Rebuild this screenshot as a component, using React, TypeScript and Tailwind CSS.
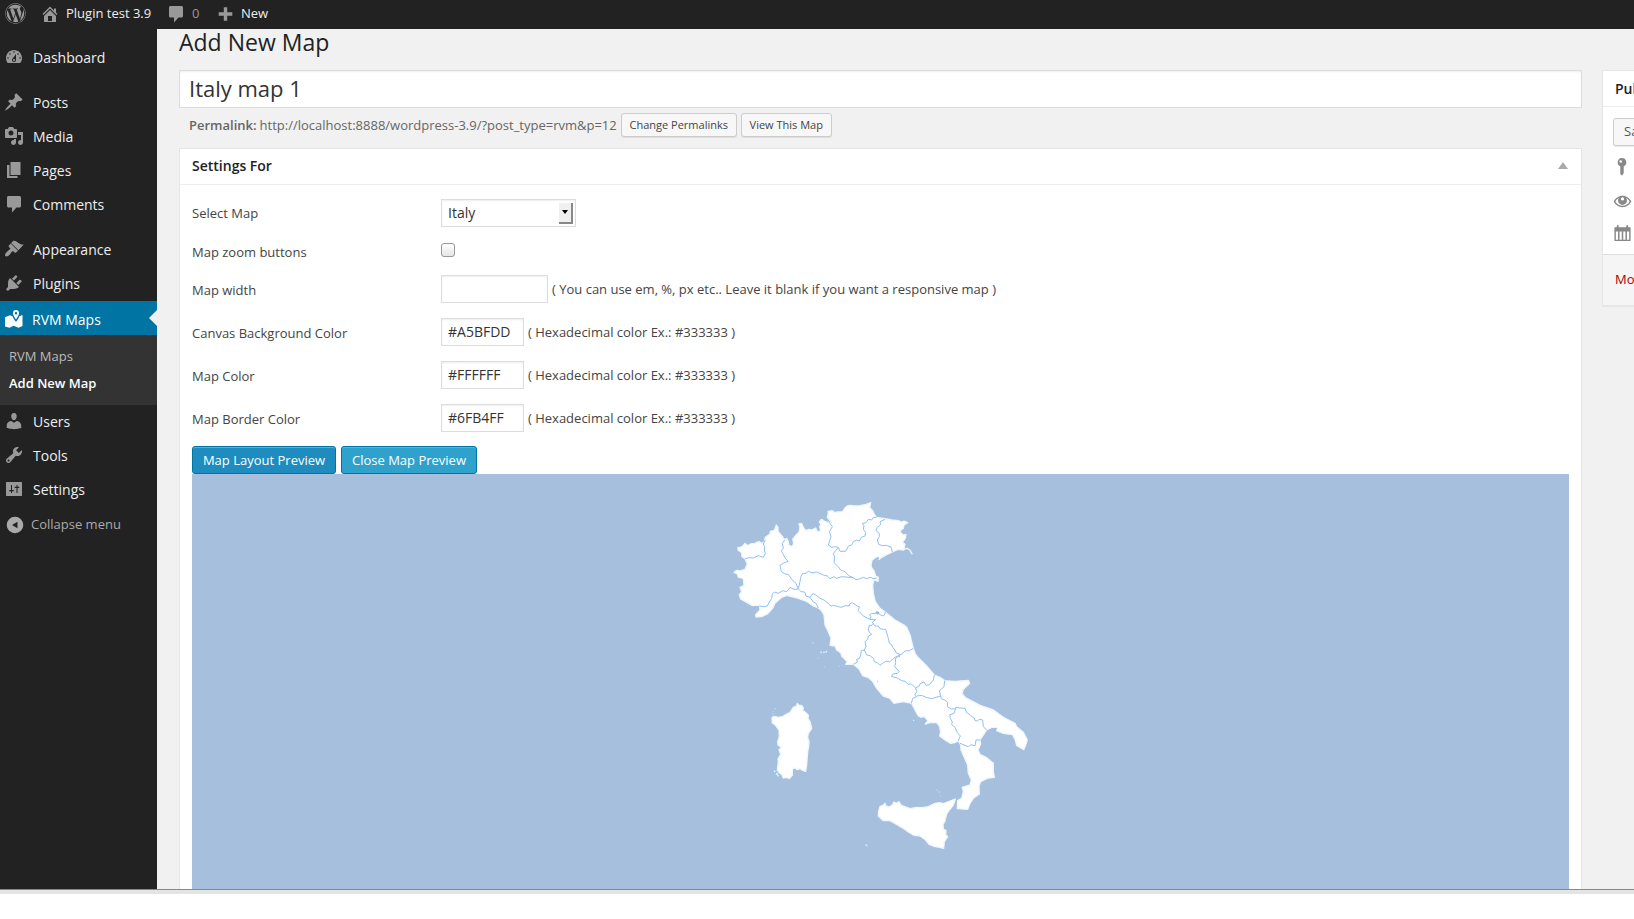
import type { ReactNode } from "react";
import { FaWordpress } from "react-icons/fa";

const ICONS = {
  home: "M16 8.5l1.53 1.53-1.06 1.06L10 4.6l-6.47 6.49-1.06-1.06L10 2.5l4 4v-2h2v4zm-6-2.46l6 5.99V18H4v-5.97zM12 17v-5H8v5h4z",
  comments: "M4.500 2h11c.8 0 1.500.7 1.500 1.500v8.500c0 .8-.7 1.500-1.500 1.500h-3l-4.500 5v-5H4.500c-.8 0-1.500-.7-1.500-1.500V3.500C3 2.700 3.700 2 4.500 2z",
  plus: "M17.300 8.300v3.400h-5.100v5.100H8.800v-5.100H3.700V8.300h5.100V3.200h3.400v5.100h5.100z",
  dashboard:
    "M3.76 16h12.48c1.1-1.37 1.76-3.11 1.76-5 0-4.42-3.58-8-8-8s-8 3.58-8 8c0 1.89.66 3.63 1.76 5zM10 4.200c.44 0 .8.36.8.8s-.36.8-.8.8-.8-.36-.8-.8.36-.8.8-.8zM6 6.200c.44 0 .8.36.8.8s-.36.8-.8.8-.8-.36-.8-.8.36-.8.8-.8zm8 0c.44 0 .8.36.8.8s-.36.8-.8.8-.8-.36-.8-.8.36-.8.8-.8zm-5.37 5.350L12 7v6c0 1.100-.9 2-2 2s-2-.9-2-2c0-.57.24-1.080.63-1.450zM4 10.200c.44 0 .8.36.8.8s-.36.8-.8.8-.8-.36-.8-.8.36-.8.8-.8zm12 0c.44 0 .8.36.8.8s-.36.8-.8.8-.8-.36-.8-.8.36-.8.8-.8zm-5 2.800c0-.55-.45-1-1-1s-1 .45-1 1 .45 1 1 1 1-.45 1-1z",
  post: "M10.44 3.02l1.82-1.82 6.36 6.35-1.83 1.82c-1.05-.68-2.48-.57-3.41.36l-.75.75c-.92.93-1.04 2.35-.35 3.41l-1.83 1.82-2.41-2.41-2.8 2.79c-.42.42-3.38 2.71-3.8 2.29s1.86-3.39 2.28-3.81l2.79-2.79L4.1 9.36l1.83-1.82c1.05.69 2.48.57 3.4-.36l.75-.75c.93-.92 1.05-2.35.36-3.41z",
  media:
    "M13 11V4c0-.55-.45-1-1-1h-1.67L9 1H5L3.67 3H2c-.55 0-1 .45-1 1v7c0 .55.45 1 1 1h10c.55 0 1-.45 1-1zM7 4.5c1.38 0 2.5 1.12 2.5 2.5S8.38 9.5 7 9.5 4.5 8.38 4.5 7 5.62 4.5 7 4.5zM14 6h5v10.5c0 1.38-1.12 2.5-2.5 2.5S14 17.88 14 16.5s1.12-2.5 2.5-2.5c.17 0 .34.02.5.05V9h-3V6zm-4 8.05V13h2v3.5c0 1.38-1.12 2.5-2.5 2.5S7 17.88 7 16.5 8.12 14 9.5 14c.17 0 .34.02.5.05z",
  page: "M6.500 15V2h10v13zm-1 1h8v2H3V5h2.500z",
  appearance:
    "M14.48 11.36L7.11 3.990l1.800-1.800c.5-.56 2.300-.47 3.510.32 1.210.8 1.430 1.280 2.910 2.100 1.180.64 2.450 1.260 4.450.85zm-.51.41L6.700 4.500 4.930 6.470c-.39.39-.39 1.020 0 1.410l1.060 1.060c.39.39.39 1.030 0 1.420-.6.6-1.430 1.110-2.210 1.690-.35.26-.7.53-1.010.84C1.430 14.230.4 16.080 1.400 17.070c.99 1 2.840-.03 4.180-1.360.31-.31.58-.66.85-1.020.57-.78 1.080-1.610 1.690-2.210.39-.39 1.020-.39 1.410 0l1.060 1.060c.39.39 1.020.39 1.410 0z",
  plugins:
    "M13.11 4.36L9.87 7.6 8 5.73l3.24-3.24c.35-.34 1.05-.2 1.56.32.52.51.66 1.21.31 1.55zm-8 1.77l.91-1.12 9.01 9.01-1.19.84c-.71.71-2.63 1.16-3.82 1.16H6.14L4.9 17.26c-.59.59-1.54.59-2.12 0-.59-.58-.59-1.53 0-2.12l1.24-1.24v-3.88c0-1.13.4-3.19 1.09-3.89zm7.26 3.97l3.24-3.24c.34-.35 1.04-.21 1.55.31.52.51.66 1.21.31 1.55l-3.24 3.25z",
  map: "M1 8.200l5-2 2.500 1c.6 1.800 1.900 3.600 3.500 5.600 1.500-2 2.800-3.800 3.400-5.600L18.500 6v11l-4 1.800-5-2-4 2L1 17.500zM12 1a3.100 3.100 0 0 1 3.100 3.100c0 1.700-1.500 4-3.100 6.400-1.600-2.400-3.100-4.700-3.100-6.400A3.100 3.100 0 0 1 12 1zm0 2a1.200 1.200 0 1 0 0 2.400A1.200 1.200 0 0 0 12 3z",
  users:
    "M10 9.25c-2.27 0-2.73-3.44-2.73-3.44C7 4.02 7.82 2 9.97 2c2.16 0 2.98 2.02 2.71 3.81 0 0-.41 3.44-2.68 3.44zm0 2.57L12.72 10c2.39 0 4.52 2.33 4.52 4.53v2.49s-3.65 1.13-7.24 1.13c-3.65 0-7.24-1.13-7.24-1.13v-2.49c0-2.25 1.94-4.48 4.47-4.48z",
  tools:
    "M16.68 9.77c-1.34 1.34-3.3 1.67-4.95.99l-5.41 6.52c-.99.99-2.59.99-3.58 0s-.99-2.59 0-3.57l6.52-5.42c-.68-1.65-.35-3.61.99-4.95 1.28-1.28 3.12-1.62 4.72-1.06l-2.89 2.89 2.82 2.82 2.86-2.87c.53 1.58.18 3.39-1.08 4.65zM3.81 16.21c.4.39 1.04.39 1.43 0 .4-.4.4-1.04 0-1.43-.39-.4-1.03-.4-1.43 0-.39.39-.39 1.03 0 1.43z",
  settings:
    "M18 16.500v-13c0-.3-.2-.5-.5-.5h-15c-.3 0-.5.2-.5.5v13c0 .3.2.5.5.5h15c.3 0 .5-.2.5-.5zM7 6h1v5h1.800v1.300H8V14H7v-1.700H5.200V11H7zm5.500 0h1v1.700h1.800V9h-1.800v5h-1V9h-1.800V7.700h1.800z",
  collapse: "M10 1.700a8.300 8.300 0 1 0 0 16.600 8.300 8.300 0 0 0 0-16.600zM12.500 6.700v6.600L7 10z",
  pin: "M10 1a4.300 4.300 0 0 1 1.700 8.250V16L10 18.800 8.300 17V9.250A4.300 4.300 0 0 1 10 1zM8.700 3.200a1.300 1.300 0 1 0 0 2.600 1.300 1.300 0 0 0 0-2.600z",
  eye: "M10 4c4.200 0 7.500 2.600 9.300 6-1.800 3.400-5.100 6-9.300 6S2.500 13.400.7 10C2.500 6.600 5.800 4 10 4zm-3.900 2.200C4.500 7 3.300 8.300 2.500 10c1.400 2.700 4.200 4.400 7.500 4.400s6.100-1.700 7.500-4.400c-.8-1.700-2-3-3.600-3.800.5.8.8 1.700.8 2.700a4.700 4.700 0 1 1-9.400 0c0-1 .3-1.900.8-2.700zM10 5.600a1.700 1.700 0 1 0 0 3.400 1.700 1.700 0 0 0 0-3.400z",
  calendar:
    "M1.500 3.500H4V2c0-.6.4-1 1-1s1 .4 1 1v1.500h8V2c0-.6.400-1 1-1s1 .4 1 1v1.500h2.500V18h-17zM3 8v8.500h2.300V8zm3.900 0v8.500h2.300V8zm3.900 0v8.500h2.300V8zm3.900 0v8.500H17V8z",
};

type IconName = keyof typeof ICONS;

function Icon({ name, className = "" }: { name: IconName; className?: string }) {
  return (
    <svg viewBox="0 0 20 20" fill="currentColor" fillRule="evenodd" className={`size-5 shrink-0 ${className}`}>
      <path d={ICONS[name]} />
    </svg>
  );
}

function MenuItem({ icon, label }: { icon: IconName; label: string }) {
  return (
    <a className="flex h-[34px] items-center gap-[9px] pb-[2px] pl-1 text-[14px] font-medium text-[#eee]">
      <Icon name={icon} className="text-[#999]" />
      {label}
    </a>
  );
}

function Sidebar() {
  return (
    <nav className="w-[157px] shrink-0 bg-[#222] pt-3">
      <MenuItem icon="dashboard" label="Dashboard" />
      <div className="mt-[11px]">
        <MenuItem icon="post" label="Posts" />
        <MenuItem icon="media" label="Media" />
        <MenuItem icon="page" label="Pages" />
        <MenuItem icon="comments" label="Comments" />
      </div>
      <div className="mt-[11px]">
        <MenuItem icon="appearance" label="Appearance" />
        <MenuItem icon="plugins" label="Plugins" />
        <a className="relative flex h-[34px] items-center gap-2 bg-[#0074a2] pt-[2px] pl-1 text-[14px] font-medium text-white">
          <Icon name="map" />
          {"RVM Maps"}
          <span className="absolute top-[9px] right-0 border-y-[8px] border-r-[8px] border-y-transparent border-r-[#f1f1f1]" />
        </a>
        <div className="flex h-[70px] flex-col bg-[#333] pt-2 pl-[9px] text-[13px] leading-[27px]">
          <a className="text-[#bbb]">RVM Maps</a>
          <a className="font-semibold text-white">Add New Map</a>
        </div>
        <MenuItem icon="users" label="Users" />
        <MenuItem icon="tools" label="Tools" />
        <MenuItem icon="settings" label="Settings" />
        <a className="flex h-[34px] items-center gap-[6px] pt-px pl-[5px] text-[13px] text-[#aaa]">
          <Icon name="collapse" />
          Collapse menu
        </a>
      </div>
    </nav>
  );
}

function AdminBar() {
  return (
    <header className="flex h-[29px] shrink-0 items-center bg-[#222] pb-[2px] pl-[5px] text-[13px] font-medium text-[#eee]">
      <FaWordpress className="size-[21px] text-[#999]" />
      <Icon name="home" className="ml-[14px] text-[#999]" />
      <span className="ml-[6px] w-[100px]">Plugin test 3.9</span>
      <Icon name="comments" className="text-[#999]" />
      <span className="ml-[6px] w-[23px] font-normal text-[#999]">0</span>
      <Icon name="plus" className="text-[#999]" />
      <span className="ml-[6px]">New</span>
    </header>
  );
}

const inputClass =
  "flex h-7 items-center border border-[#ddd] bg-white px-[6px] pb-[2px] text-[14px] text-[#333] shadow-[inset_0_1px_2px_rgba(0,0,0,0.07)]";

function Row({ label, height, labelPad = "pt-[4px]", children }: { label: string; height: string; labelPad?: string; children: ReactNode }) {
  return (
    <div className={`flex items-center ${height}`}>
      <span className={`w-[249px] ${labelPad}`}>{label}</span>
      {children}
    </div>
  );
}

function ColorRow({ label, value, height }: { label: string; value: string; height: string }) {
  return (
    <Row label={label} height={height}>
      <span className={`${inputClass} w-[83px]`}>{value}</span>
      <span className="ml-[4px] pt-[2px]">( Hexadecimal color Ex.: #333333 )</span>
    </Row>
  );
}

const MAINLAND =
  "54,172 60,173 68,168 75,160 82,167 95,161 106,160 110,157 118,155 124,160 133,156 136,142 150,132 151,124 163,121 169,105 174,112 174,124 185,137 194,150 200,145 205,155 206,165 217,170 221,160 218,148 226,138 237,126 240,113 237,102 244,100 250,112 257,122 266,118 275,120 287,114 293,126 302,122 299,110 303,104 298,96 304,88 314,94 325,98 330,92 322,82 325,70 324,64 337,62 345,68 352,66 368,65 374,55 382,48 390,46 406,48 420,47 438,43 452,38 449,52 458,62 462,72 470,82 495,86 515,90 535,92 545,96 552,93 563,98 552,105 550,115 541,121 542,128 550,135 558,134 556,145 547,157 555,163 551,180 534,178 517,186 500,194 485,202 478,208 468,201 456,211 453,225 455,234 462,242 467,258 475,262 474,274 462,268 458,285 460,310 466,335 480,355 500,370 525,390 552,405 560,412 570,435 580,475 585,490 592,500 620,528 643,555 660,562 674,572 705,574 745,571 749,580 730,598 726,610 735,622 780,646 820,660 850,682 885,700 890,710 910,727 922,750 915,770 911,779 890,766 886,750 878,734 850,730 830,722 834,712 815,712 800,720 790,735 780,750 782,762 774,780 780,793 800,803 820,820 820,845 823,862 805,864 782,875 777,888 778,912 760,925 750,940 743,958 712,956 713,932 725,925 730,905 727,892 750,885 754,870 745,850 743,825 732,800 723,780 722,765 715,752 705,758 692,760 675,750 659,738 662,725 658,708 650,698 632,697 616,702 624,692 615,682 610,679 604,682 595,678 585,660 575,640 550,635 522,640 515,632 510,625 490,618 470,595 457,573 445,563 428,557 418,538 400,523 377,523 382,515 365,498 362,488 350,480 345,468 330,466 333,445 325,425 315,405 312,375 303,360 295,354 280,348 262,335 235,325 200,316 185,322 165,340 158,355 142,372 125,380 108,381 107,374 120,360 118,345 97,347 82,338 62,327 58,315 65,305 60,292 72,287 70,265 55,262 52,252 42,247 50,241 60,243 75,238 82,222 75,206 66,200 65,188 54,180";

const SARDINIA =
  "96,82 104,79 115,82 128,80 140,72 150,68 160,52 170,48 172,40 178,47 185,46 190,54 188,62 195,66 205,76 204,86 210,95 215,115 205,130 203,142 207,155 206,170 203,185 200,225 197,244 190,242 180,236 172,239 163,233 157,238 157,255 148,266 140,262 130,264 126,254 118,248 112,240 115,215 114,208 122,192 117,180 124,172 114,165 113,155 118,140 117,120 106,105 97,99";

const SICILY =
  "420,350 430,345 435,340 438,348 447,351 457,345 462,336 470,340 477,335 483,345 490,348 510,356 530,352 545,353 565,350 585,340 598,338 610,341 630,333 646,327 640,345 628,360 620,372 614,395 609,403 610,418 618,421 617,434 623,440 613,455 611,475 600,472 585,470 567,463 555,448 540,438 520,435 505,426 490,415 465,400 450,392 430,392 415,378 416,362";

const BORDERS = [
  "75,206 88,203 100,204 115,197 130,202 136,190 133,180 134,170 130,162 136,150",
  "194,150 187,160 190,175 184,182 188,190 196,205 204,214 190,220 180,226 184,245 195,252 205,253 215,268 228,280 235,297",
  "118,348 132,350 142,348 148,336 155,325 157,312 163,306 175,310 188,302 200,305 210,292 222,298 235,297",
  "235,297 243,305 254,306 258,318 270,322 280,336 288,340 295,354",
  "235,297 240,275 242,262 248,250 258,250 265,244 276,249 290,246 310,255 322,258 330,266 342,260 350,265 365,260 400,263",
  "400,263 408,269 415,268 430,262 440,266 450,262 460,266 470,264",
  "400,263 386,257 375,245 362,240 355,230 342,218 344,202 340,190 347,182 355,172",
  "330,92 328,98 337,110 328,125 333,140 329,152 325,165 335,172 346,170 355,172",
  "355,172 360,184 375,184 380,180 385,168 395,165 400,155 410,150 418,153 424,142 435,138 437,128 430,118 432,108 427,100 438,98 445,88 455,90 460,82 470,82",
  "495,88 480,95 482,104 472,112 468,122 478,130 478,140 472,150 476,163 487,167 500,166 513,171 517,186",
  "270,322 278,311 285,313 300,325 312,330 325,340 332,348 340,346 355,350 365,352 375,347 388,348 390,341 397,338 412,348 418,350 415,362 430,378 450,388",
  "450,388 453,380 449,374 455,370 465,371 470,364 480,374 490,378 495,372 495,366",
  "450,388 467,389 457,397 465,408 475,408 480,416 490,418 497,418 505,445 508,460 515,464 518,472 525,480 528,488 538,492 538,502",
  "460,400 453,408 448,405 445,420 449,428 455,433 445,438 443,448 435,455 438,470 433,480 440,495",
  "433,480 424,482 422,495 418,506 410,508 412,516 400,523",
  "440,495 450,497 460,505 463,515 472,518 480,526 490,518 500,513 508,516 525,502 538,496",
  "538,496 545,492 555,483 568,482 580,475",
  "538,496 526,506 527,518 524,530 538,545 532,550 518,552 515,560 530,563 545,572 555,574 565,583 574,582 587,594",
  "587,594 598,588 600,581 612,576 618,586 628,584 640,570 643,555",
  "587,594 590,605 584,615 590,620 578,625 574,640",
  "590,618 605,616 618,622 635,626 648,622 662,618",
  "674,572 672,590 664,597 658,602 662,618",
  "662,618 664,626 674,630 683,637 682,650 694,657 707,656",
  "707,656 707,652 720,654 735,655 740,668 750,674 755,680 763,684 765,692 772,693 777,688 788,690 790,710 800,720",
  "707,656 702,670 690,674 690,683 697,696 695,704 705,712 712,728 721,738 715,752",
  "720,760 735,766 745,770 753,764 765,768 768,750 782,750",
];

const ISLETS = [
  [278, 459, 2], [303, 487, 3], [312, 487, 3], [319, 485, 3], [295, 505, 1.5], [314, 530, 1.5], [358, 529, 1.5],
  [473, 574, 1.5], [581, 691, 2.5], [438, 1065, 3], [442, 1067, 2], [164, 844, 3], [171, 852, 4], [174, 857, 3],
  [165, 656, 2], [160, 664, 1.5], [159, 672, 2], [651, 900, 1.5], [658, 906, 2], [661, 917, 1.5], [679, 879, 0.5],
  [630, 901, 0.5], [526, 887, 0.5], [464, 960, 0.5], [446, 957, 0.5],
];

/** Regions of Italy; one map unit is a third of a pixel. */
function ItalyMap() {
  return (
    <svg viewBox="-1584 -48 4131 1245" className="block h-[415px] w-full bg-[#a5bfdd]" strokeLinejoin="round">
      <g fill="#fff" stroke="#eef6ff" strokeWidth="4">
        <polygon points={MAINLAND} />
        <g transform="translate(60 600)">
          <polygon points={SARDINIA} />
          <polygon points={SICILY} />
        </g>
        <polyline points="551,178 562,175 570,181 577,193" fill="none" />
      </g>
      <g fill="#fff" stroke="#8fc0f8" strokeWidth="1.5">
        {ISLETS.map(([x, y, r]) => (
          <circle key={`${x}-${y}`} cx={x} cy={y} r={r} />
        ))}
      </g>
      <g fill="none" stroke="#8dc1fb" strokeWidth="3">
        {BORDERS.map((points) => (
          <polyline key={points} points={points} />
        ))}
      </g>
      <path d="M466 368l8-4 5 5-6 5zM468 203l10-2-4 8z" fill="#8fb9e8" />
    </svg>
  );
}

const smallButton =
  "flex h-6 items-center justify-center rounded-[3px] border border-[#ccc] bg-[#f7f7f7] text-[11px] text-[#444] shadow-[0_1px_0_rgba(0,0,0,0.08)]";
const primaryButton =
  "flex h-7 items-center justify-center rounded-[3px] border border-[#0074a2] text-[13px] font-medium text-white";

function SettingsBox() {
  return (
    <section className="mt-[11px] border border-[#e5e5e5] bg-white text-[13px] text-[#444]">
      <div className="flex h-9 items-center justify-between border-b border-[#eee] pr-[13px] pb-[2px] pl-3">
        <h2 className="text-[14px] font-semibold text-[#222]">Settings For</h2>
        <span className="border-x-[5px] border-b-[7px] border-x-transparent border-b-[#aaa]" />
      </div>
      <div className="px-3 pt-[7px]">
        <Row label="Select Map" height="h-[42px]" labelPad="pt-[2px]">
          <span className="flex h-7 w-[135px] items-center justify-between border border-[#ddd] bg-white pr-[2px] pl-[6px] text-[14px] text-[#333] shadow-[inset_0_1px_2px_rgba(0,0,0,0.07)]">
            <span className="pb-[2px]">Italy</span>
            <span className="flex h-[21px] w-[14px] items-center justify-center border-r-2 border-b-2 border-[#888] bg-[#f0f0f0]">
              <span className="border-x-[3.5px] border-t-[4px] border-x-transparent border-t-black" />
            </span>
          </span>
        </Row>
        <Row label="Map zoom buttons" height="h-[33px]">
          <span className="-mt-px size-[14px] rounded-[3px] border border-[#999] bg-gradient-to-b from-white to-[#e6e6e6]" />
        </Row>
        <Row label="Map width" height="h-[44px]">
          <span className={`${inputClass} w-[107px]`} />
          <span className="ml-[4px] pt-[2px]">( You can use em, %, px etc.. Leave it blank if you want a responsive map )</span>
        </Row>
        <ColorRow label="Canvas Background Color" value="#A5BFDD" height="h-[42px]" />
        <ColorRow label="Map Color" value="#FFFFFF" height="h-[44px]" />
        <ColorRow label="Map Border Color" value="#6FB4FF" height="h-[42px]" />
        <div className="mt-[7px] flex gap-[5px]">
          <span className={`${primaryButton} w-[144px] bg-[#1e8cbe] pt-px shadow-[inset_0_1px_0_rgba(120,200,230,0.6)]`}>
            Map Layout Preview
          </span>
          <span className={`${primaryButton} w-[136px] bg-[#2ea2cc] pt-px shadow-[inset_0_1px_0_rgba(120,200,230,0.5)]`}>
            Close Map Preview
          </span>
        </div>
        <ItalyMap />
      </div>
    </section>
  );
}

function PublishBox() {
  return (
    <aside className="mt-[41px] ml-5 h-[236px] w-[280px] shrink-0 border border-[#e5e5e5] bg-white text-[13px] shadow-[0_1px_1px_rgba(0,0,0,0.04)]">
      <h2 className="flex h-9 items-center border-b border-[#eee] pl-3 text-[14px] font-semibold text-[#222]">Publish</h2>
      <div className="flex h-[148px] flex-col border-b border-[#ddd] pt-[11px] pl-[9px] text-[#888]">
        <span className="ml-px flex h-7 w-[90px] items-center rounded-[3px] border border-[#ccc] bg-[#f7f7f7] pl-[10px] text-[#555] shadow-[0_1px_0_rgba(0,0,0,0.08)]">
          Save Draft
        </span>
        <Icon name="pin" className="mt-[11px]" />
        <Icon name="eye" className="mt-[15px] ml-[0.5px] !size-[19px]" />
        <Icon name="calendar" className="mt-[13px] ml-[0.5px] !size-[19px]" />
      </div>
      <div className="h-[50px] bg-[#f5f5f5] pt-[14px] pl-3 leading-[20px] text-[#a00]">Move to Trash</div>
    </aside>
  );
}

export default function App() {
  return (
    <div className="h-[919px] w-full overflow-hidden bg-white font-['Open_Sans',sans-serif]">
      <div className="flex h-[889px] flex-col overflow-hidden bg-[#f1f1f1]">
        <AdminBar />
        <div className="flex min-h-0 flex-1">
          <Sidebar />
          <div className="flex min-w-0 flex-1 pl-[22px]">
            <main className="w-[1403px] shrink-0">
              <h1 className="-mt-[3px] h-[44px] text-[23px] leading-[32px] text-[#222]">Add New Map</h1>
              <div className="flex h-[38px] items-center border border-[#ddd] bg-white pb-px pl-[9px] text-[22px] text-[#333] shadow-[inset_0_1px_2px_rgba(0,0,0,0.07)]">
                Italy map 1
              </div>
              <div className="mt-[5px] flex h-6 items-center pl-[10px] text-[13px] text-[#666]">
                <strong className="mr-[3px] pt-px font-semibold">Permalink:</strong>
                <span className="mr-1 pt-px">http://localhost:8888/wordpress-3.9/?post_type=rvm&amp;p=12</span>
                <span className={`${smallButton} mr-1 w-[116px]`}>Change Permalinks</span>
                <span className={`${smallButton} w-[91px]`}>View This Map</span>
              </div>
              <SettingsBox />
            </main>
            <PublishBox />
          </div>
        </div>
      </div>
      <div className="h-[5px] border-t border-[#888] bg-[#e4e4e4]" />
    </div>
  );
}
